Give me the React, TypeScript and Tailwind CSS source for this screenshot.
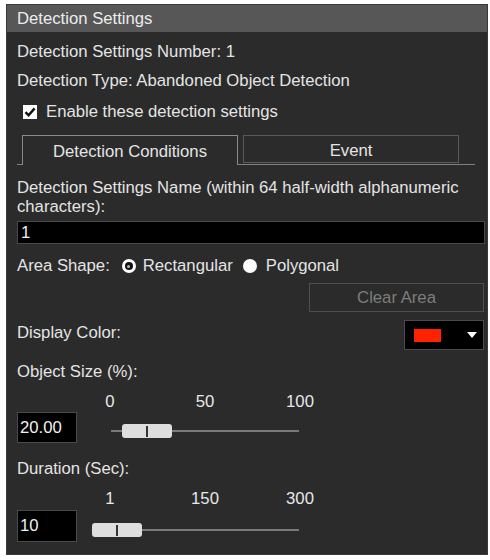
import React from 'react';

const font = { fontFamily: '"Liberation Sans", Arial, sans-serif' };

export default function App() {
  return (
    <div className="w-[490px] h-[560px] bg-white pt-[4px] pl-[6px]" style={font}>
      <div className="w-[482px] h-[551px] bg-[#2b2b2b] border border-[#3a3a3a] flex flex-col text-[16.7px] text-[#e4e4e4]">
        <div className="h-[27px] bg-[#575757] flex items-center pl-[10px] text-[#ececec]">
          Detection Settings
        </div>

        <div className="flex flex-col pl-[10px] pr-[3px]">
          <div className="mt-[6px] h-[28px] flex items-center">Detection Settings Number: 1</div>
          <div className="mt-[1px] h-[28px] flex items-center">Detection Type: Abandoned Object Detection</div>
          <div className="mt-[3px] h-[28px] flex items-center gap-[9px] pl-[6px]">
            <Checkbox />
            <span>Enable these detection settings</span>
          </div>

          {/* tabs */}
          <div className="mt-[10px] w-[458px] h-[29px] flex items-end border-b border-[#808080] pl-[5px]">
            <div className="w-[216px] h-[30px] -mb-px border border-b-0 border-[#8a8a8a] bg-[#2b2b2b] flex items-center justify-center pt-[3px]">
              Detection Conditions
            </div>
            <div className="ml-[5px] w-[216px] h-[28px] mb-[1px] border border-[#5a5a5a] flex items-center justify-center pt-[4px]">
              Event
            </div>
          </div>

          <div className="mt-[13px] leading-[19px]">
            Detection Settings Name (within 64 half-width alphanumeric characters):
          </div>
          <div className="mt-[5px] h-[23px] w-[468px] bg-black border border-[#4a4a4a] flex items-center pl-[3px] text-[#f0f0f0]">
            1
          </div>

          <div className="mt-[12px] h-[20px] flex items-center">
            <span>Area Shape:</span>
            <span className="ml-[12px]"><RadioOn /></span>
            <span className="ml-[7px]">Rectangular</span>
            <span className="ml-[10px] w-[14px] h-[14px] rounded-full bg-white" />
            <span className="ml-[9px]">Polygonal</span>
          </div>

          <div className="mt-[7px] flex justify-end">
            <div className="w-[175px] h-[29px] border border-[#4e4e4e] flex items-center justify-center text-[#7d7d7d]">
              Clear Area
            </div>
          </div>

          <div className="mt-[8px] h-[30px] flex justify-between">
            <div className="pt-[3px] leading-[19px]">Display Color:</div>
            <div className="w-[80px] h-[30px] bg-black border border-[#4a4a4a] flex items-center pl-[9px] pr-[6px]">
              <div className="w-[27px] h-[13px] bg-[#ff2200]" />
              <div className="ml-auto w-0 h-0 border-l-[5px] border-r-[5px] border-t-[6px] border-l-transparent border-r-transparent border-t-white" />
            </div>
          </div>

          <div className="mt-[12px] leading-[19px]">Object Size (%):</div>
          <Scale labels={['0', '50', '100']} />
          <div className="mt-[1px] flex items-start">
            <ValueBox value="20.00" h="h-[31px]" />
            <Slider gap="ml-[34px]" width="w-[188px]" thumbLeft="left-[11px]" top="mt-[12px]" />
          </div>

          <div className="mt-[16px] leading-[19px]">Duration (Sec):</div>
          <Scale labels={['1', '150', '300']} />
          <div className="mt-[2px] flex items-start">
            <ValueBox value="10" h="h-[32px]" />
            <Slider gap="ml-[15px]" width="w-[207px]" thumbLeft="left-0" top="mt-[13px]" />
          </div>
        </div>
      </div>
    </div>
  );
}

function Checkbox() {
  return (
    <span className="w-[14px] h-[14px] bg-white flex items-center justify-center">
      <svg width="12" height="12" viewBox="0 0 12 12">
        <path d="M1.5 6.2 L4.6 9.3 L10.6 2.4" fill="none" stroke="#111" strokeWidth="2.4" />
      </svg>
    </span>
  );
}

function RadioOn() {
  return (
    <span className="w-[14px] h-[14px] rounded-full bg-white flex items-center justify-center">
      <span className="w-[8px] h-[8px] rounded-full bg-[#111] flex items-center justify-center">
        <span className="w-[3px] h-[3px] rounded-full bg-[#bbb]" />
      </span>
    </span>
  );
}

function Scale({ labels }: { labels: string[] }) {
  return (
    <div className="mt-[11px] h-[19px] flex items-center ml-[73px] gap-[55px] text-[#e8e8e8]">
      {labels.map((l) => (
        <div key={l} className="w-[40px] text-center">
          {l}
        </div>
      ))}
    </div>
  );
}

function ValueBox({ value, h }: { value: string; h: string }) {
  return (
    <div className={`w-[60px] ${h} bg-black border border-[#4a4a4a] flex items-center pl-[2px] text-[#f0f0f0]`}>
      {value}
    </div>
  );
}

function Slider({
  gap,
  width,
  thumbLeft,
  top,
}: {
  gap: string;
  width: string;
  thumbLeft: string;
  top: string;
}) {
  return (
    <div className={`${gap} ${width} ${top} relative h-[14px] flex items-center`}>
      <div className="w-full h-[2px] bg-[#7a7a7a]" />
      <div
        className={`absolute ${thumbLeft} top-0 w-[50px] h-[14px] rounded-[3px] bg-[#dedede] flex items-center justify-center`}
      >
        <div className="w-[2px] h-[11px] bg-[#333]" />
      </div>
    </div>
  );
}
